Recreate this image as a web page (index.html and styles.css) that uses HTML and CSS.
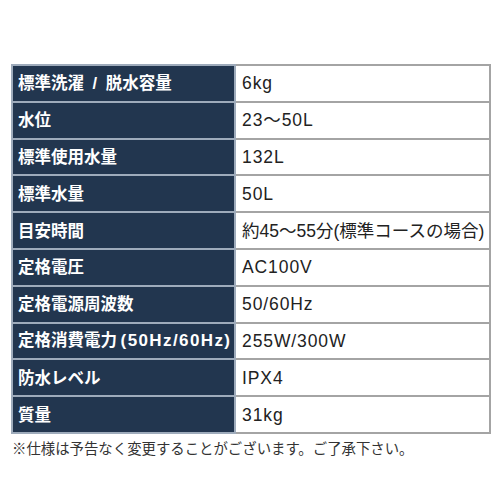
FILE: index.html
```html
<!DOCTYPE html>
<html lang="ja">
<head>
<meta charset="utf-8">
<link rel="stylesheet" href="styles.css">
</head>
<body>
<div class="page">
<table class="spec">
<tr><th>標準洗濯<span class="sep"> / </span>脱水容量</th><td>6kg</td></tr>
<tr><th>水位</th><td>23～50L</td></tr>
<tr><th>標準使用水量</th><td>132L</td></tr>
<tr><th>標準水量</th><td>50L</td></tr>
<tr><th>目安時間</th><td class="mixed">約45～55分(標準コースの場合)</td></tr>
<tr><th>定格電圧</th><td>AC100V</td></tr>
<tr><th>定格電源周波数</th><td>50/60Hz</td></tr>
<tr><th>定格消費電力 <span class="latin">(50Hz/60Hz)</span></th><td>255W/300W</td></tr>
<tr><th>防水レベル</th><td>IPX4</td></tr>
<tr><th>質量</th><td>31kg</td></tr>
</table>
<p class="note">※仕様は予告なく変更することがございます。ご了承下さい。</p>
</div>
</body>
</html>
```
FILE: styles.css
```css
html, body {
  margin: 0;
  padding: 0;
  background: #ffffff;
}
.page {
  padding: 64px 9px 0 11px;
  font-family: "Liberation Sans", "Noto Sans CJK JP", sans-serif;
}
.spec {
  width: 480px;
  border-collapse: collapse;
  table-layout: fixed;
}
.spec th, .spec td {
  height: 34.8px;
  padding: 0 0 0 5px;
  border: 2px solid #a4a4a4;
  line-height: 20px;
  text-align: left;
  vertical-align: middle;
  white-space: nowrap;
}
.spec th {
  width: 216px;
  font-size: 16.5px;
  background: #22364f;
  color: #ffffff;
  font-weight: 700;
  border-color: #9eabbb;
}
.spec th .sep {
  padding: 0 4px;
}
.spec th .latin {
  font-size: 17px;
  letter-spacing: 1.4px;
  margin-left: -1px;
}
.spec td {
  padding-left: 6px;
  font-size: 17.5px;
  letter-spacing: 0.9px;
  color: #222222;
  font-weight: 400;
  background: #ffffff;
}
.spec td.mixed {
  letter-spacing: 0;
}
.note {
  margin: 4px 0 0 1px;
  font-family: "Noto Sans CJK JP", sans-serif;
  font-size: 14.4px;
  line-height: 20px;
  color: #333333;
}
```
